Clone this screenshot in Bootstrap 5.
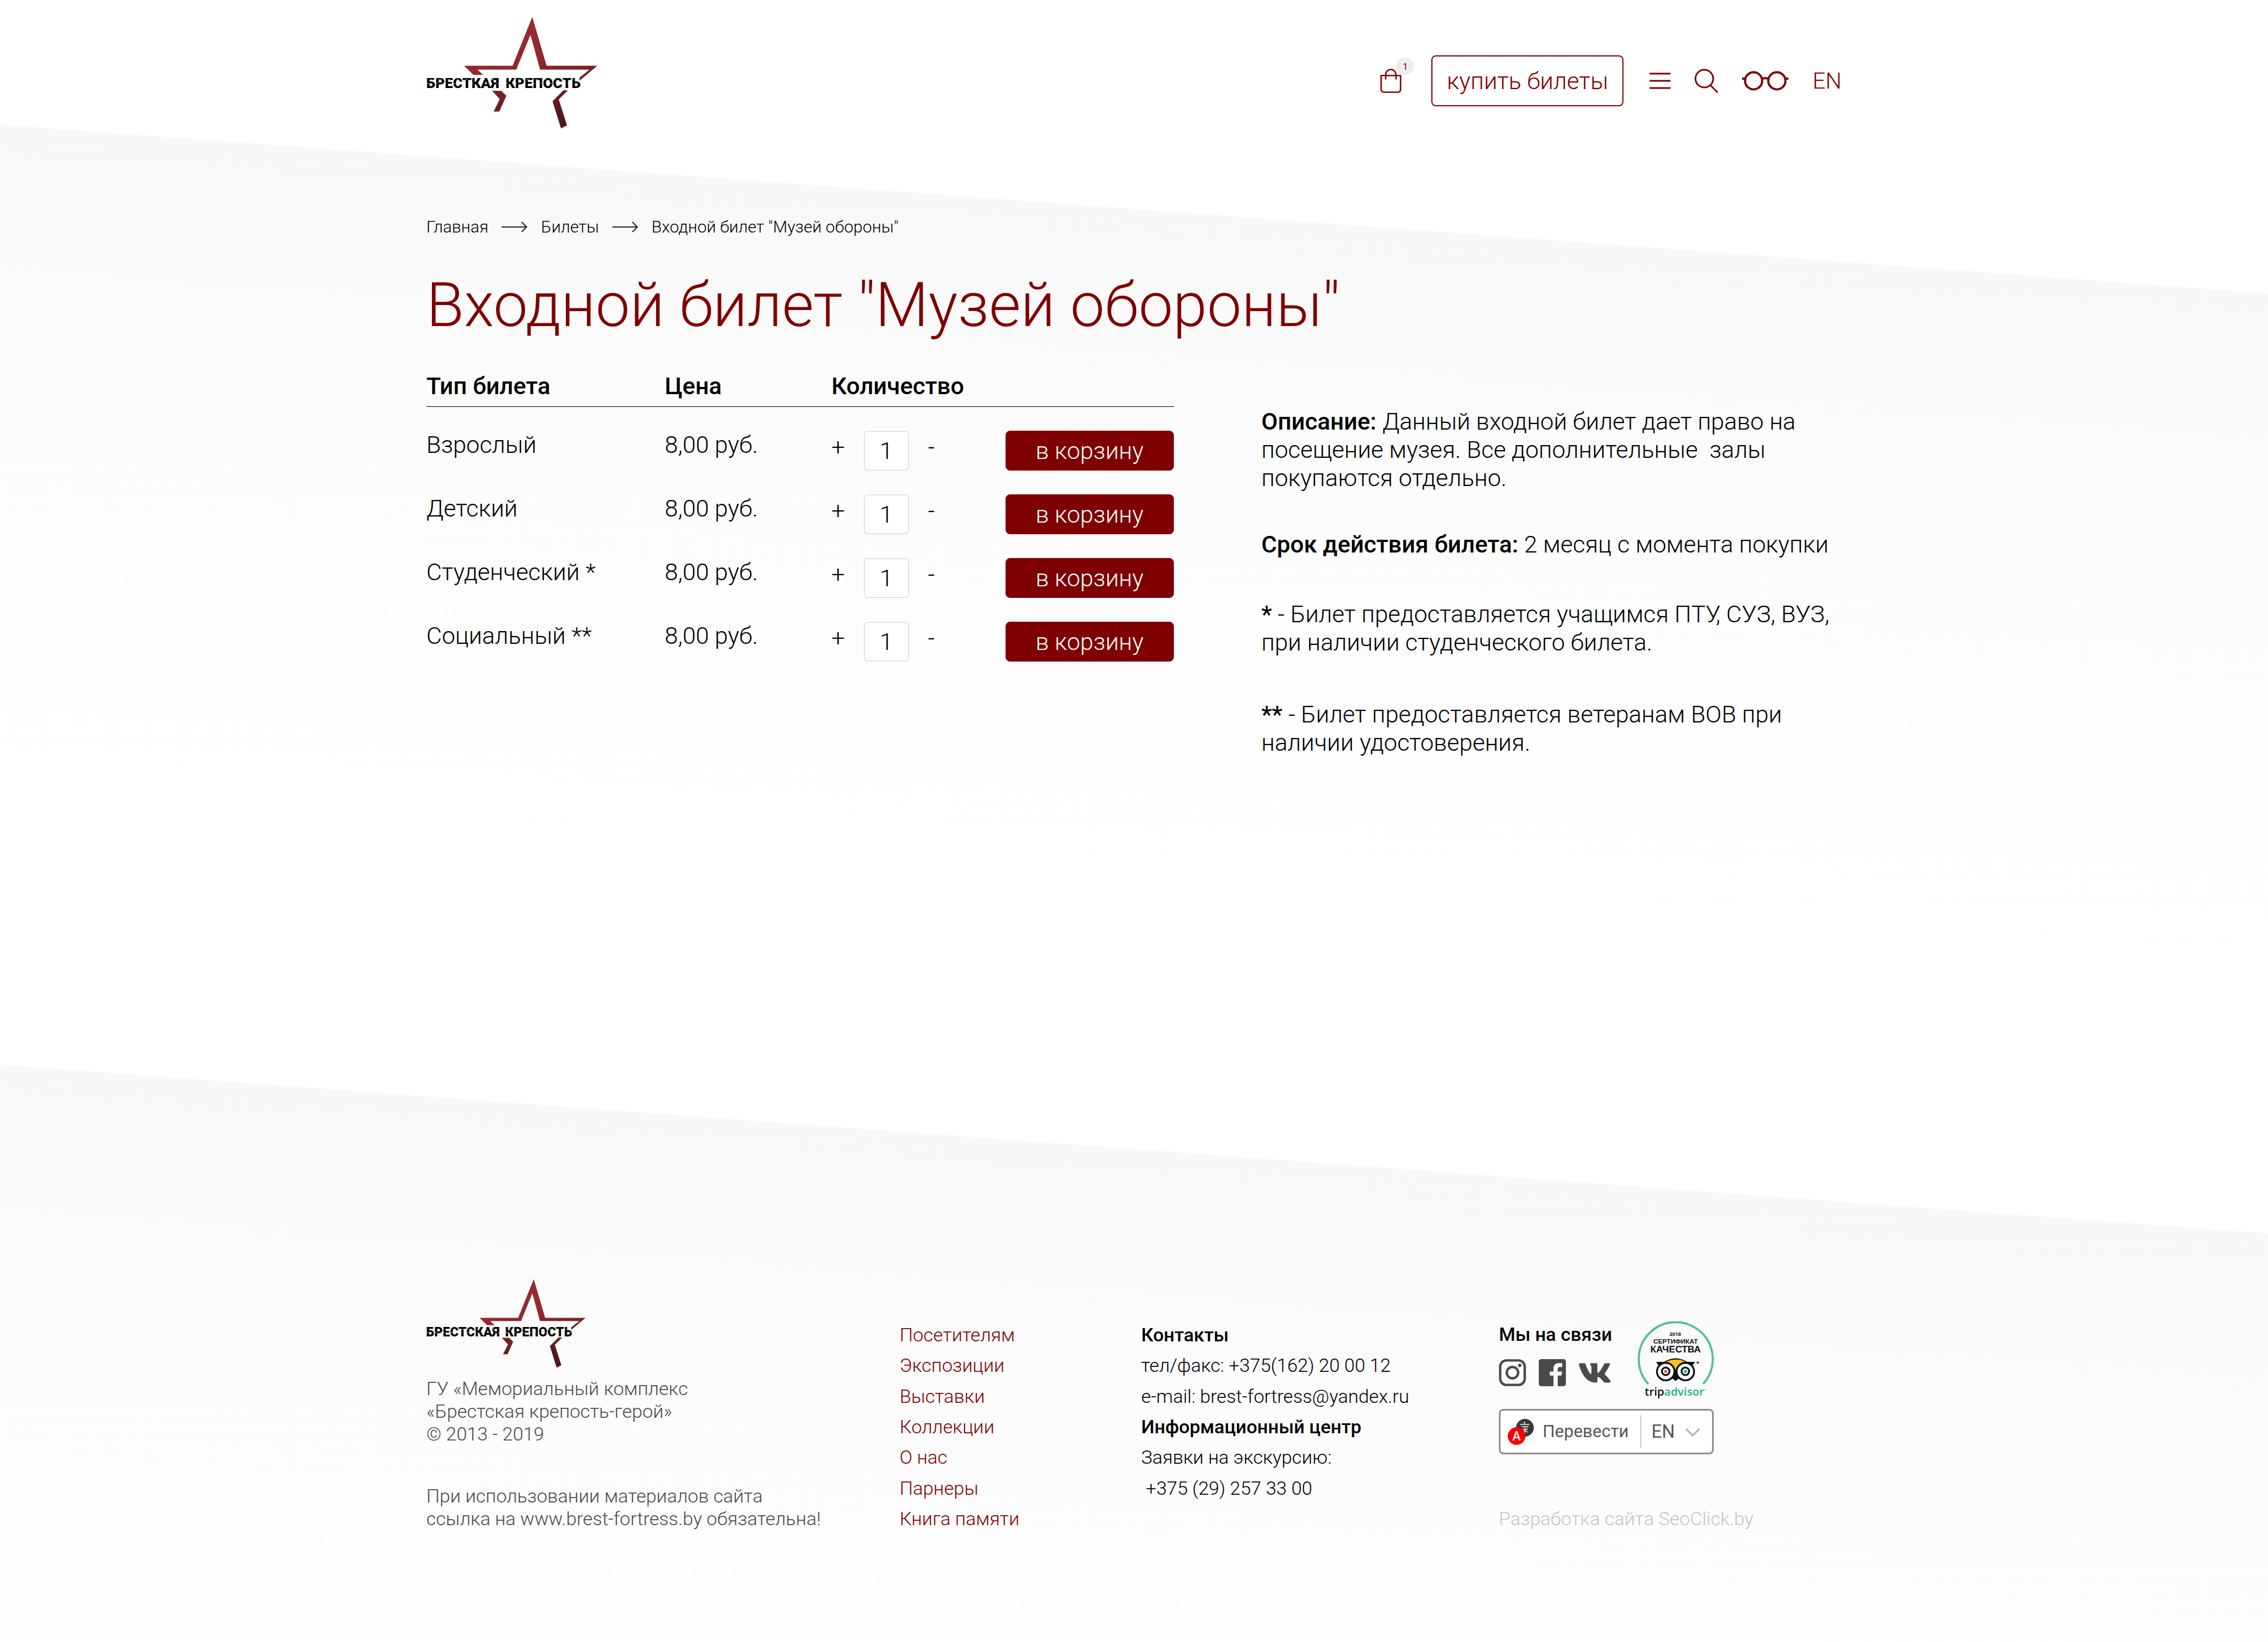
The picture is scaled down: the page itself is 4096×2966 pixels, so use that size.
<!DOCTYPE html>
<html lang="ru">
<head>
<meta charset="utf-8">
<meta name="viewport" content="width=device-width, initial-scale=1">
<title>Входной билет "Музей обороны"</title>
<link href="https://cdn.jsdelivr.net/npm/bootstrap@5.3.0/dist/css/bootstrap.min.css" rel="stylesheet">
<style>
:root{--wine:#7f0000;--ash:#4a4a4a}
body{font-family:Roboto,"Liberation Sans",sans-serif;font-weight:300;font-size:43px;line-height:50px;color:#000;background:#fff}
a{color:inherit;text-decoration:none}
svg{display:block;flex:none}
.site-wrap{width:62.4%;margin:0 auto}
.plain-btn{background:none;border:0;padding:0;color:inherit;font:inherit}
.site-head{padding:29px 0 0;height:225px}
.head-tools{height:92px;margin-top:71px;gap:43px;color:var(--wine)}
.lang-link{font-size:41px}
.bag-count{width:32px;height:32px;left:29px;top:-20px;font-size:17px;line-height:32px;font-weight:400;background:#ededed;border-radius:50%;text-align:center}
.buy-btn{--bs-btn-color:var(--wine);--bs-btn-border-color:var(--wine);--bs-btn-hover-bg:var(--wine);--bs-btn-hover-color:#fff;--bs-btn-font-weight:300;--bs-btn-font-size:43px;--bs-btn-line-height:50px;--bs-btn-border-width:2px;--bs-btn-border-radius:8px;--bs-btn-padding-x:26px;--bs-btn-padding-y:19px;margin:0 4px 0 11px}
.slant{background:linear-gradient(184.3deg,#f8f8f8 304px,#fcfcfc 800px,#fff 1550px);clip-path:polygon(0 0,100% 305px,100% 100%,0 100%)}
.page-main{padding:167px 0 556px}
.crumbs{--bs-breadcrumb-margin-bottom:58px;font-size:30px;line-height:36px;gap:24px}
.page-title{font-size:111px;line-height:130px;font-weight:300;color:var(--wine);margin:0 0 56px}
.col-tickets{flex:0 0 52.8%}
.col-about{flex:0 0 41%;padding-top:64px;line-height:51px}
.ticket-table{table-layout:fixed;width:100%}
.ticket-table th{font-weight:500;padding:0 0 12px}
.ticket-table thead{border-bottom:1px solid #000}
.ticket-table td{padding:43px 0 0;vertical-align:top}
.qty{gap:34px}
.qty button{padding-top:4px}
.qty .form-control{width:82px;height:72px;font-size:43px;line-height:50px;font-weight:300;border:2px solid #e2e2e2;border-radius:7px;padding:0;text-align:center;color:#000}
.cart-btn{--bs-btn-bg:var(--wine);--bs-btn-color:#fff;--bs-btn-border-color:var(--wine);--bs-btn-hover-bg:#600000;--bs-btn-hover-color:#fff;--bs-btn-font-weight:300;--bs-btn-font-size:43px;--bs-btn-line-height:50px;--bs-btn-border-radius:8px;--bs-btn-padding-y:10px;--bs-btn-padding-x:0}
.col-about strong,.foot strong{font-weight:500}
.about-a{margin-bottom:69px}.about-b{margin-bottom:75px}.about-c{margin-bottom:79px}
.foot{padding:387px 0 193px;font-size:34px}
.foot-grid{display:grid;grid-template-columns:856fr 437fr 647fr 620fr}
.foot-brand{color:var(--ash);line-height:41px;padding-bottom:7px}
.foot-brand svg{margin-bottom:17px}
.foot-brand p{margin-bottom:71px}
.foot-list{display:grid;grid-template-rows:repeat(7,1fr);align-items:center;line-height:40px;margin:73px 0 0;padding:0;list-style:none}
.foot-nav{color:var(--wine)}
.foot-social{margin-top:73px}
.social-top{width:388px;margin-bottom:18px}
.social-head{line-height:55px;margin-bottom:17px}
.social-icons{gap:23px;color:var(--ash)}
.translate-box{width:388px;height:82px;border:3px solid #8c8c8c;border-radius:8px;background:#fff;color:#555;font-weight:400;font-size:33px;line-height:40px;padding-left:13px}
.translate-word{font-size:31px}
.translate-rule{width:2px;height:60px;background:#ccc;margin:0 0 0 20px}
.lang-select{appearance:none;background:none;border:0;color:inherit;font:inherit;width:116px;padding:0 0 0 19px}
.chev{right:10px;top:14px;pointer-events:none}
.credit{color:#c4c4c4;line-height:55px}
</style>
</head>
<body>
<svg width="0" height="0" class="position-absolute" aria-hidden="true">
  <defs>
    <linearGradient id="wineFade" x1="0" y1="0" x2=".3" y2="1"><stop offset="0" stop-color="#a02c30"/><stop offset=".5" stop-color="#91282c"/><stop offset=".75" stop-color="#742024"/><stop offset="1" stop-color="#55161a"/></linearGradient>
    <path id="fortStar" fill="url(#wineFade)" d="M811 60L912 405H1270L1144 512V489L1215 433H866L798 187L698 433H424L464 470H396L329 405H672ZM527 582H592L628 617L578 729H538L581 641ZM1030 579H1063L998 643L1056 826L1014 848L954 656Z"/>
  </defs>
</svg>

<header class="site-head">
  <div class="site-wrap d-flex justify-content-between align-items-start">
    <a href="#" aria-label="Брестская крепость">
      <svg width="311" height="205" viewBox="63 55 1216 800">
        <use href="#fortStar"/>
        <g font-family="Roboto" font-weight="900" font-size="103" fill="#000"><text x="62" y="562">БРЕСТКАЯ</text><text x="622" y="562">КРЕПОСТЬ</text></g>
        <path d="M66 531H1130M90 503H1130" stroke="#fff" stroke-width="3" stroke-dasharray="16 46" fill="none"/>
      </svg>
    </a>
    <nav class="head-tools d-flex align-items-center">
      <a href="#" class="position-relative" aria-label="Корзина">
        <svg width="38" height="44" viewBox="51 126 147 168" fill="none" stroke="currentColor" stroke-width="10"><path d="M56 173H192V268Q192 289 171 289H77Q56 289 56 268ZM88 200V168A36 37 0 0 1 160 168V200"/></svg>
        <span class="bag-count position-absolute">1</span>
      </a>
      <a href="#" class="btn buy-btn">купить билеты</a>
      <button type="button" class="plain-btn" aria-label="Меню"><svg width="38" height="30" viewBox="0 0 38 30" stroke="currentColor" stroke-width="3"><path d="M0 2H38M0 15H38M0 28H38"/></svg></button>
      <button type="button" class="plain-btn" aria-label="Поиск"><svg width="43" height="44" viewBox="0 0 43 44" fill="none" stroke="currentColor" stroke-width="3"><circle cx="18" cy="18" r="16"/><path d="M29 30L42 43"/></svg></button>
      <button type="button" class="plain-btn" aria-label="Версия для слабовидящих"><svg width="84" height="36" viewBox="0 0 84 36" fill="none" stroke="currentColor" stroke-width="4"><circle cx="21" cy="18" r="15.500"/><circle cx="63" cy="18" r="15.500"/><path d="M36 15Q42 11 48 15M0 14H6M78 14H84"/></svg></button>
      <a href="#" class="lang-link">EN</a>
    </nav>
  </div>
</header>

<main class="page-main slant">
  <div class="site-wrap">
    <nav aria-label="breadcrumb">
      <ol class="breadcrumb crumbs align-items-center">
        <li><a href="#">Главная</a></li>
        <li aria-hidden="true"><svg width="47" height="20" viewBox="0 0 47 20" fill="none" stroke="#222" stroke-width="2"><path d="M0 10H45M36 1L45 10L36 19"/></svg></li>
        <li><a href="#">Билеты</a></li>
        <li aria-hidden="true"><svg width="47" height="20" viewBox="0 0 47 20" fill="none" stroke="#222" stroke-width="2"><path d="M0 10H45M36 1L45 10L36 19"/></svg></li>
        <li aria-current="page">Входной билет "Музей обороны"</li>
      </ol>
    </nav>
    <h1 class="page-title">Входной билет "Музей обороны"</h1>
    <div class="d-flex justify-content-between align-items-start">
      <section class="col-tickets">
        <table class="ticket-table">
          <colgroup><col style="width:31.900%"><col style="width:22.300%"><col style="width:23.300%"><col style="width:22.500%"></colgroup>
          <thead><tr><th scope="col">Тип билета</th><th scope="col">Цена</th><th scope="col">Количество</th><th></th></tr></thead>
          <tbody>
            <tr><td>Взрослый</td><td>8,00 руб.</td><td><div class="qty d-flex align-items-start"><button type="button" class="plain-btn">+</button><input class="form-control" type="text" value="1" aria-label="Количество: взрослый"><button type="button" class="plain-btn">-</button></div></td><td><button type="button" class="btn cart-btn w-100">в корзину</button></td></tr>
            <tr><td>Детский</td><td>8,00 руб.</td><td><div class="qty d-flex align-items-start"><button type="button" class="plain-btn">+</button><input class="form-control" type="text" value="1" aria-label="Количество: детский"><button type="button" class="plain-btn">-</button></div></td><td><button type="button" class="btn cart-btn w-100">в корзину</button></td></tr>
            <tr><td>Студенческий *</td><td>8,00 руб.</td><td><div class="qty d-flex align-items-start"><button type="button" class="plain-btn">+</button><input class="form-control" type="text" value="1" aria-label="Количество: студенческий"><button type="button" class="plain-btn">-</button></div></td><td><button type="button" class="btn cart-btn w-100">в корзину</button></td></tr>
            <tr><td>Социальный **</td><td>8,00 руб.</td><td><div class="qty d-flex align-items-start"><button type="button" class="plain-btn">+</button><input class="form-control" type="text" value="1" aria-label="Количество: социальный"><button type="button" class="plain-btn">-</button></div></td><td><button type="button" class="btn cart-btn w-100">в корзину</button></td></tr>
          </tbody>
        </table>
      </section>
      <section class="col-about">
        <p class="about-a"><strong>Описание:</strong> Данный входной билет дает право на посещение музея. Все дополнительные&nbsp; залы покупаются отдельно.</p>
        <p class="about-b"><strong>Срок действия билета:</strong> 2 месяц с момента покупки</p>
        <p class="about-c"><strong>*</strong> - Билет предоставляется учащимся ПТУ, СУЗ, ВУЗ, при наличии студенческого билета.</p>
        <p class="mb-0"><strong>**</strong> - Билет предоставляется ветеранам ВОВ при наличии удостоверения.</p>
      </section>
    </div>
  </div>
</main>

<footer class="foot slant">
  <div class="site-wrap foot-grid">
    <div class="foot-brand">
      <svg width="288" height="161" viewBox="38 35 1126 630" role="img" aria-label="Брестская крепость">
        <use href="#fortStar" transform="translate(152 -11) scale(.795)"/>
        <g font-family="Roboto" font-weight="900" font-size="92" fill="#000"><text x="36" y="443">БРЕСТСКАЯ</text><text x="594" y="443">КРЕПОСТЬ</text></g>
        <path d="M40 415H1062M60 392H1062" stroke="#fbfbfb" stroke-width="3" stroke-dasharray="14 42" fill="none"/>
      </svg>
      <p>ГУ «Мемориальный комплекс<br>«Брестская крепость-герой»<br>© 2013 - 2019</p>
      <div>При использовании материалов сайта<br>ссылка на www.brest-fortress.by обязательна!</div>
    </div>
    <ul class="foot-list foot-nav">
      <li><a href="#">Посетителям</a></li>
      <li><a href="#">Экспозиции</a></li>
      <li><a href="#">Выставки</a></li>
      <li><a href="#">Коллекции</a></li>
      <li><a href="#">О нас</a></li>
      <li><a href="#">Парнеры</a></li>
      <li><a href="#">Книга памяти</a></li>
    </ul>
    <ul class="foot-list">
      <li><strong>Контакты</strong></li>
      <li>тел/факс: +375(162) 20 00 12</li>
      <li>e-mail: brest-fortress@yandex.ru</li>
      <li><strong>Информационный центр</strong></li>
      <li>Заявки на экскурсию:</li>
      <li>&nbsp;+375 (29) 257 33 00</li>
    </ul>
    <div class="foot-social d-flex flex-column">
      <div class="social-top d-flex justify-content-between">
        <div>
          <div class="social-head"><strong>Мы на связи</strong></div>
          <div class="social-icons d-flex align-items-center">
            <a href="#" aria-label="Instagram"><svg width="49" height="49" viewBox="24 33 190 190" fill="none" stroke="currentColor" stroke-width="17"><rect x="33" y="42" width="172" height="172" rx="44"/><circle cx="119" cy="128" r="40"/><circle cx="170" cy="77" r="12" fill="currentColor" stroke="none"/></svg></a>
            <a href="#" aria-label="Facebook"><svg width="49" height="49" viewBox="300 33 190 190" fill="currentColor"><path d="M318 33H472Q490 33 490 51V205Q490 223 472 223H433V148H459L463 120H433V102Q433 88 448 88H464V61H440Q403 61 403 98V120H377V148H403V223H318Q300 223 300 205V51Q300 33 318 33Z"/></svg></a>
            <a href="#" aria-label="VK"><svg width="58" height="36" viewBox="581 58 228 141" fill="currentColor"><path d="M590 60H622q6 0 8 6C642 100 655 125 666 137q6-2 6-10V92q0-12-8-22q-4-10 6-10H708q6 0 6 7V125q3 5 8 3C738 112 752 85 762 66q3-6 8-6H799q8 0 4 9C794 92 780 112 768 130q-4 5 0 10C784 156 800 172 807 186q3 10-7 11H768q-5 0-9-5C748 178 735 162 720 156q-6 0-6 8V190q0 7-7 7C650 199 610 160 583 70q-2-10 7-10z"/></svg></a>
          </div>
        </div>
        <svg class="mt-1" width="138" height="140" viewBox="34 38 541 547" role="img" aria-label="tripadvisor">
          <path d="M112 480A262 262 0 1 1 500 480" fill="none" stroke="#21a57a" stroke-width="13"/>
          <path d="M112 480A262 262 0 1 1 500 480" fill="none" stroke="#7fe3c0" stroke-width="4"/>
          <g text-anchor="middle" font-weight="700" fill="#0b0f19">
            <text x="303" y="138" font-family="Open Sans" font-size="36">2018</text>
            <text x="305" y="194" font-family="Liberation Sans" font-size="46">СЕРТИФИКАТ</text>
            <text x="305" y="257" font-family="Liberation Sans" font-size="67">КАЧЕСТВА</text>
            <text x="297" y="562" font-family="Open Sans" font-weight="600" font-size="80">trip<tspan fill="#21b286">advisor</tspan></text>
          </g>
          <path fill="#0b0f19" d="M167 323H222Q305 272 388 323H442L424 352L305 458L186 352Z"/>
          <path fill="#fcc015" d="M236 322Q305 292 374 320Q322 335 305 380Q290 338 236 322Z"/>
          <g stroke="#0b0f19" stroke-width="13"><circle cx="235" cy="392" r="62" fill="#fff"/><circle cx="374" cy="392" r="62" fill="#fff"/><circle cx="235" cy="390" r="27" fill="#fff"/><circle cx="374" cy="390" r="27" fill="#fff"/></g>
          <path fill="#0b0f19" d="M276 436H334L305 459Z"/>
          <circle cx="235" cy="391" r="12" fill="#f0694a"/><circle cx="374" cy="391" r="12" fill="#21b286"/>
          <circle cx="462" cy="328" r="8" fill="#333"/><circle cx="516" cy="521" r="7" fill="#a5e3cf"/>
        </svg>
      </div>
      <div class="translate-box d-flex align-items-center">
        <button type="button" class="plain-btn d-flex align-items-center gap-3">
          <svg width="47" height="47" viewBox="0 0 47 47"><circle cx="31" cy="16" r="16" fill="#383838"/><path d="M22 10H39M30 5V10M25 14H37M27 18L36 24M36 17L26 26M31 14V25" stroke="#c8c8c8" stroke-width="2" fill="none"/><circle cx="16" cy="31" r="16" fill="#f00"/><text x="16" y="39" font-family="Roboto" font-weight="500" font-size="23" text-anchor="middle" fill="#fff">A</text></svg>
          <span class="translate-word">Перевести</span>
        </button>
        <span class="translate-rule"></span>
        <div class="position-relative">
          <select class="lang-select" aria-label="Язык"><option>EN</option><option>RU</option></select>
          <svg class="chev position-absolute" width="26" height="15" viewBox="0 0 26 15" fill="none" stroke="#aaa" stroke-width="3"><path d="M1 1L13 13L25 1"/></svg>
        </div>
      </div>
      <div class="credit mt-auto">Разработка сайта SeoClick.by</div>
    </div>
  </div>
</footer>
<script src="https://cdn.jsdelivr.net/npm/bootstrap@5.3.0/dist/js/bootstrap.bundle.min.js"></script>
</body>
</html>
